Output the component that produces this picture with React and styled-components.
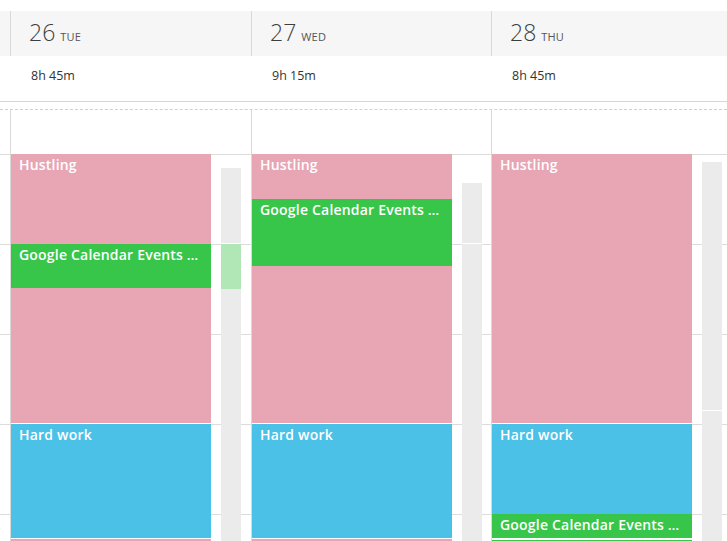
import React from 'react';
import styled, { createGlobalStyle } from 'styled-components';

const GlobalStyle = createGlobalStyle`
  html, body {
    margin: 0;
    padding: 0;
    background: #fff;
  }
  body {
    font-family: "Open Sans", "Liberation Sans", sans-serif;
  }
`;

const GCAL = 'Google Calendar Events …';

// px relative to first hour line, 90px per hour
const days = [
  {
    num: 26,
    name: 'TUE',
    total: '8h 45m',
    events: [
      { title: 'Hustling', color: '#e8a6b4', top: 0, height: 269 },
      { title: GCAL, color: '#37c649', top: 90, height: 44 },
      { title: 'Hard work', color: '#4bc1e8', top: 270, height: 114 },
      { title: '', color: '#e8a6b4', top: 385, height: 90 },
    ],
    bar: [
      { top: 14, height: 75, color: '#ebebeb' },
      { top: 90, height: 45, color: '#b1e6b6' },
      { top: 135, height: 300, color: '#ebebeb' },
    ],
  },
  {
    num: 27,
    name: 'WED',
    total: '9h 15m',
    events: [
      { title: 'Hustling', color: '#e8a6b4', top: 0, height: 269 },
      { title: GCAL, color: '#37c649', top: 45, height: 67 },
      { title: 'Hard work', color: '#4bc1e8', top: 270, height: 114 },
      { title: '', color: '#e8a6b4', top: 385, height: 90 },
    ],
    bar: [
      { top: 29, height: 60, color: '#ebebeb' },
      { top: 90, height: 345, color: '#ebebeb' },
    ],
  },
  {
    num: 28,
    name: 'THU',
    total: '8h 45m',
    events: [
      { title: 'Hustling', color: '#e8a6b4', top: 0, height: 269 },
      { title: 'Hard work', color: '#4bc1e8', top: 270, height: 90 },
      { title: GCAL, color: '#37c649', top: 360, height: 24 },
      { title: '', color: '#37c649', top: 386, height: 60 },
    ],
    bar: [
      { top: 8, height: 248, color: '#ebebeb' },
      { top: 257, height: 200, color: '#ebebeb' },
    ],
  },
];

const ALL_DAY = 44;

function App() {
  return (
    <>
      <GlobalStyle />
      <Page>
        <HeaderRow>
          <Gutter />
          {days.map(d => (
            <DayHead key={d.num}>
              <DayNum>{d.num}</DayNum>
              <DayName>{d.name}</DayName>
            </DayHead>
          ))}
        </HeaderRow>

        <SummaryRow>
          <Gutter />
          {days.map(d => (
            <SummaryCell key={d.num}>{d.total}</SummaryCell>
          ))}
        </SummaryRow>

        <Body>
          <BodyGutter />
          {days.map(d => (
            <DayColumn key={d.num}>
              {d.events.map((e, i) => (
                <Event
                  key={i}
                  $color={e.color}
                  style={{ top: ALL_DAY + e.top, height: e.height }}
                >
                  {e.title && <EventTitle>{e.title}</EventTitle>}
                </Event>
              ))}
              {d.bar.map((b, i) => (
                <BarSegment
                  key={'b' + i}
                  $color={b.color}
                  style={{ top: ALL_DAY + b.top, height: b.height }}
                />
              ))}
            </DayColumn>
          ))}
        </Body>
      </Page>
    </>
  );
}

export default App;

const Page = styled.div`
  width: 727px;
  height: 541px;
  overflow: hidden;
  padding-top: 11px;
  box-sizing: border-box;
  background: #fff;
`;

const columns = `10px 241px 240px 240px`;

const HeaderRow = styled.div`
  display: grid;
  grid-template-columns: ${columns};
  height: 45px;
  background: #f6f6f6;
`;

const Gutter = styled.div``;

const DayHead = styled.div`
  border-left: 1px solid #d9d9d9;
  display: flex;
  align-items: baseline;
  padding: 7px 0 0 18px;
  gap: 5px;
  color: #444;
`;

const DayNum = styled.span`
  font-family: "Open Sans", sans-serif;
  font-weight: 300;
  font-size: 23px;
  line-height: 28px;
  color: #3e3e3e;
`;

const DayName = styled.span`
  font-size: 11px;
  color: #555;
  letter-spacing: 0.2px;
`;

const SummaryRow = styled.div`
  display: grid;
  grid-template-columns: ${columns};
  height: 45px;
  border-bottom: 1px solid #d6d6d6;
`;

const SummaryCell = styled.div`
  padding: 11px 0 0 21px;
  font-size: 12.5px;
  color: #333;
  line-height: 18px;
`;

const Body = styled.div`
  margin-top: 7px;
  border-top: 1px dashed #d0d0d0;
  display: grid;
  grid-template-columns: ${columns};
  height: 480px;
  background-image: linear-gradient(to bottom, #dcdcdc 1px, transparent 1px);
  background-size: 100% 90px;
  background-position: 0 ${ALL_DAY}px;
`;

const BodyGutter = styled.div``;

const DayColumn = styled.div`
  position: relative;
  border-left: 1px solid #d9d9d9;
`;

const Event = styled.div`
  position: absolute;
  left: 0;
  width: 200px;
  background: ${p => p.$color};
  padding: 2px 8px 0;
  box-sizing: border-box;
  overflow: hidden;
`;

const EventTitle = styled.div`
  color: #fff;
  font-size: 14px;
  font-weight: 600;
  line-height: 18px;
  letter-spacing: 0.2px;
  white-space: nowrap;
  overflow: hidden;
  text-overflow: ellipsis;
`;

const BarSegment = styled.div`
  position: absolute;
  left: 210px;
  width: 20px;
  background: ${p => p.$color};
`;
